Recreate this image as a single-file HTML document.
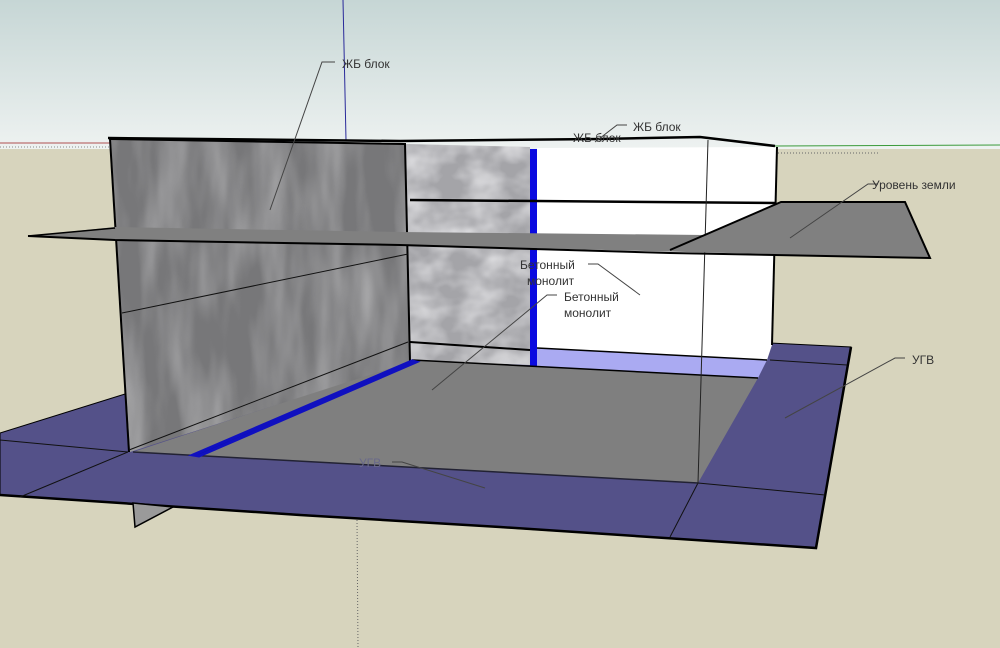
<!DOCTYPE html>
<html><head><meta charset="utf-8"><style>
html,body{margin:0;padding:0;width:1000px;height:648px;overflow:hidden;background:#d7d4bd}
svg{display:block}
text{font-family:"Liberation Sans",sans-serif;font-size:12px;fill:#333}
</style></head><body>
<svg width="1000" height="648" viewBox="0 0 1000 648" xmlns="http://www.w3.org/2000/svg">
<defs>
<linearGradient id="sky" x1="0" y1="0" x2="0" y2="1">
<stop offset="0" stop-color="#c6d6d5"/><stop offset="1" stop-color="#eef2f1"/>
</linearGradient>
<filter id="tex1" x="0" y="0" width="100%" height="100%">
<feTurbulence type="fractalNoise" baseFrequency="0.035 0.008" numOctaves="3" seed="4"/>
<feColorMatrix type="matrix" values="0 0 0 0 0.62  0 0 0 0 0.62  0 0 0 0 0.63  1.0 0 0 0 -0.35"/>
<feComposite in2="SourceGraphic" operator="in"/>
</filter>
<filter id="tex2" x="0" y="0" width="100%" height="100%">
<feTurbulence type="fractalNoise" baseFrequency="0.03 0.04" numOctaves="3" seed="9"/>
<feColorMatrix type="matrix" values="0 0 0 0 0.9  0 0 0 0 0.9  0 0 0 0 0.92  1.3 0 0 0 -0.4"/>
<feComposite in2="SourceGraphic" operator="in"/>
</filter>
</defs>
<rect x="0" y="0" width="1000" height="150" fill="url(#sky)"/>
<rect x="0" y="149" width="1000" height="499" fill="#d7d4bd"/>
<line x1="0" y1="143" x2="110" y2="143" stroke="#b05050" stroke-width="1"/>
<line x1="0" y1="147" x2="110" y2="147" stroke="#8a8a8a" stroke-width="1" stroke-dasharray="1,2"/>
<line x1="775" y1="146" x2="1000" y2="145" stroke="#3a9a3a" stroke-width="1"/>
<line x1="775" y1="153" x2="880" y2="153" stroke="#666" stroke-width="1" stroke-dasharray="1,2"/>
<line x1="343" y1="0" x2="346" y2="140" stroke="#2a2a9a" stroke-width="1"/>
<line x1="357" y1="520" x2="358" y2="648" stroke="#666" stroke-width="1" stroke-dasharray="1,2"/>

<polygon points="0,433 125,394 770,343 851,347 816,548 0,495" fill="#545189" stroke="#000" stroke-width="1"/>
<polyline points="0,495 300,515 500,527 816,548 851,347" fill="none" stroke="#000" stroke-width="2.5"/>
<line x1="0" y1="440" x2="128" y2="452" stroke="#111" stroke-width="1"/>
<line x1="20" y1="497" x2="128" y2="452" stroke="#111" stroke-width="1"/>
<line x1="698" y1="483" x2="825" y2="495" stroke="#111" stroke-width="1"/>
<line x1="698" y1="483" x2="670" y2="537" stroke="#111" stroke-width="1"/>
<line x1="770" y1="360" x2="847" y2="365" stroke="#111" stroke-width="1"/>
<polygon points="133,503 173,507 135,527" fill="#9a9a9a" stroke="#000" stroke-width="1.5"/>

<polygon points="405,144 530,147 530,365 410,360" fill="#a4a4a8"/>
<polygon points="405,144 530,147 530,365 410,360" fill="#fff" filter="url(#tex2)"/>
<polygon points="537,148 777,147 772,345 767,360 537,348" fill="#fff"/>
<polygon points="537,348 767,360 758,378 537,367" fill="#aaaaf2"/>
<rect x="530" y="149" width="7" height="217" fill="#0a0ae0"/>
<line x1="410" y1="200" x2="775" y2="203" stroke="#000" stroke-width="2.5"/>
<line x1="410" y1="342" x2="530" y2="350" stroke="#000" stroke-width="2"/>
<line x1="537" y1="348" x2="767" y2="360" stroke="#000" stroke-width="1.5"/>
<line x1="777" y1="147" x2="772" y2="345" stroke="#000" stroke-width="2"/>

<polygon points="133,452 412,360 758,378 698,483" fill="#7f7f7f"/>
<line x1="133" y1="452" x2="698" y2="483" stroke="#223" stroke-width="1.5"/>
<line x1="412" y1="360" x2="758" y2="378" stroke="#000" stroke-width="1.5"/>

<polygon points="110,139 405,144 410,362 130,452" fill="#777779"/>
<polygon points="110,139 405,144 410,362 130,452" fill="#fff" filter="url(#tex1)"/>
<polyline points="110,139 405,144 410,362" fill="none" stroke="#000" stroke-width="2"/>
<line x1="110" y1="139" x2="129" y2="452" stroke="#000" stroke-width="2"/>
<line x1="122" y1="313" x2="408" y2="254" stroke="#111" stroke-width="1"/>
<line x1="129" y1="450" x2="408" y2="342" stroke="#111" stroke-width="1"/>
<polygon points="193,455 412,361 416,362 199,456" fill="#0a0ab0" stroke="#1010c0" stroke-width="3"/>

<polyline points="108,138 400,141 600,139 700,137 775,146" fill="none" stroke="#000" stroke-width="2.5"/>
<line x1="708" y1="140" x2="698" y2="483" stroke="#222" stroke-width="1"/>

<polygon points="28,236 115,227 400,232 705,235 781,202 905,202 930,258 400,245 115,240" fill="#808080"/>
<polyline points="28,236 115,240 400,245 670,253 930,258 905,202 781,202 670,250" fill="none" stroke="#000" stroke-width="2"/>
<line x1="28" y1="236" x2="115" y2="228" stroke="#000" stroke-width="1.5"/>

<g stroke="#444" stroke-width="1" fill="none">
<polyline points="335,62 322,62 270,210"/>
<polyline points="627,125 617,125 595,142"/>
<polyline points="878,184 868,184 790,238"/>
<polyline points="588,264 598,264 640,295"/>
<polyline points="557,295 547,295 432,390"/>
<polyline points="905,358 895,358 785,418"/>
<polyline points="392,462 402,462 485,488"/>
</g>
<text x="342" y="68">ЖБ блок</text>
<text x="633" y="131">ЖБ блок</text>
<text x="573" y="142">ЖБ блок</text>
<text x="872" y="189">Уровень земли</text>
<text x="520" y="269">Бетонный</text>
<text x="527" y="285">монолит</text>
<text x="564" y="301">Бетонный</text>
<text x="564" y="317">монолит</text>
<text x="912" y="364">УГВ</text>
<text x="359" y="467" style="fill:#6a6a8a">УГВ</text>
</svg>
</body></html>
